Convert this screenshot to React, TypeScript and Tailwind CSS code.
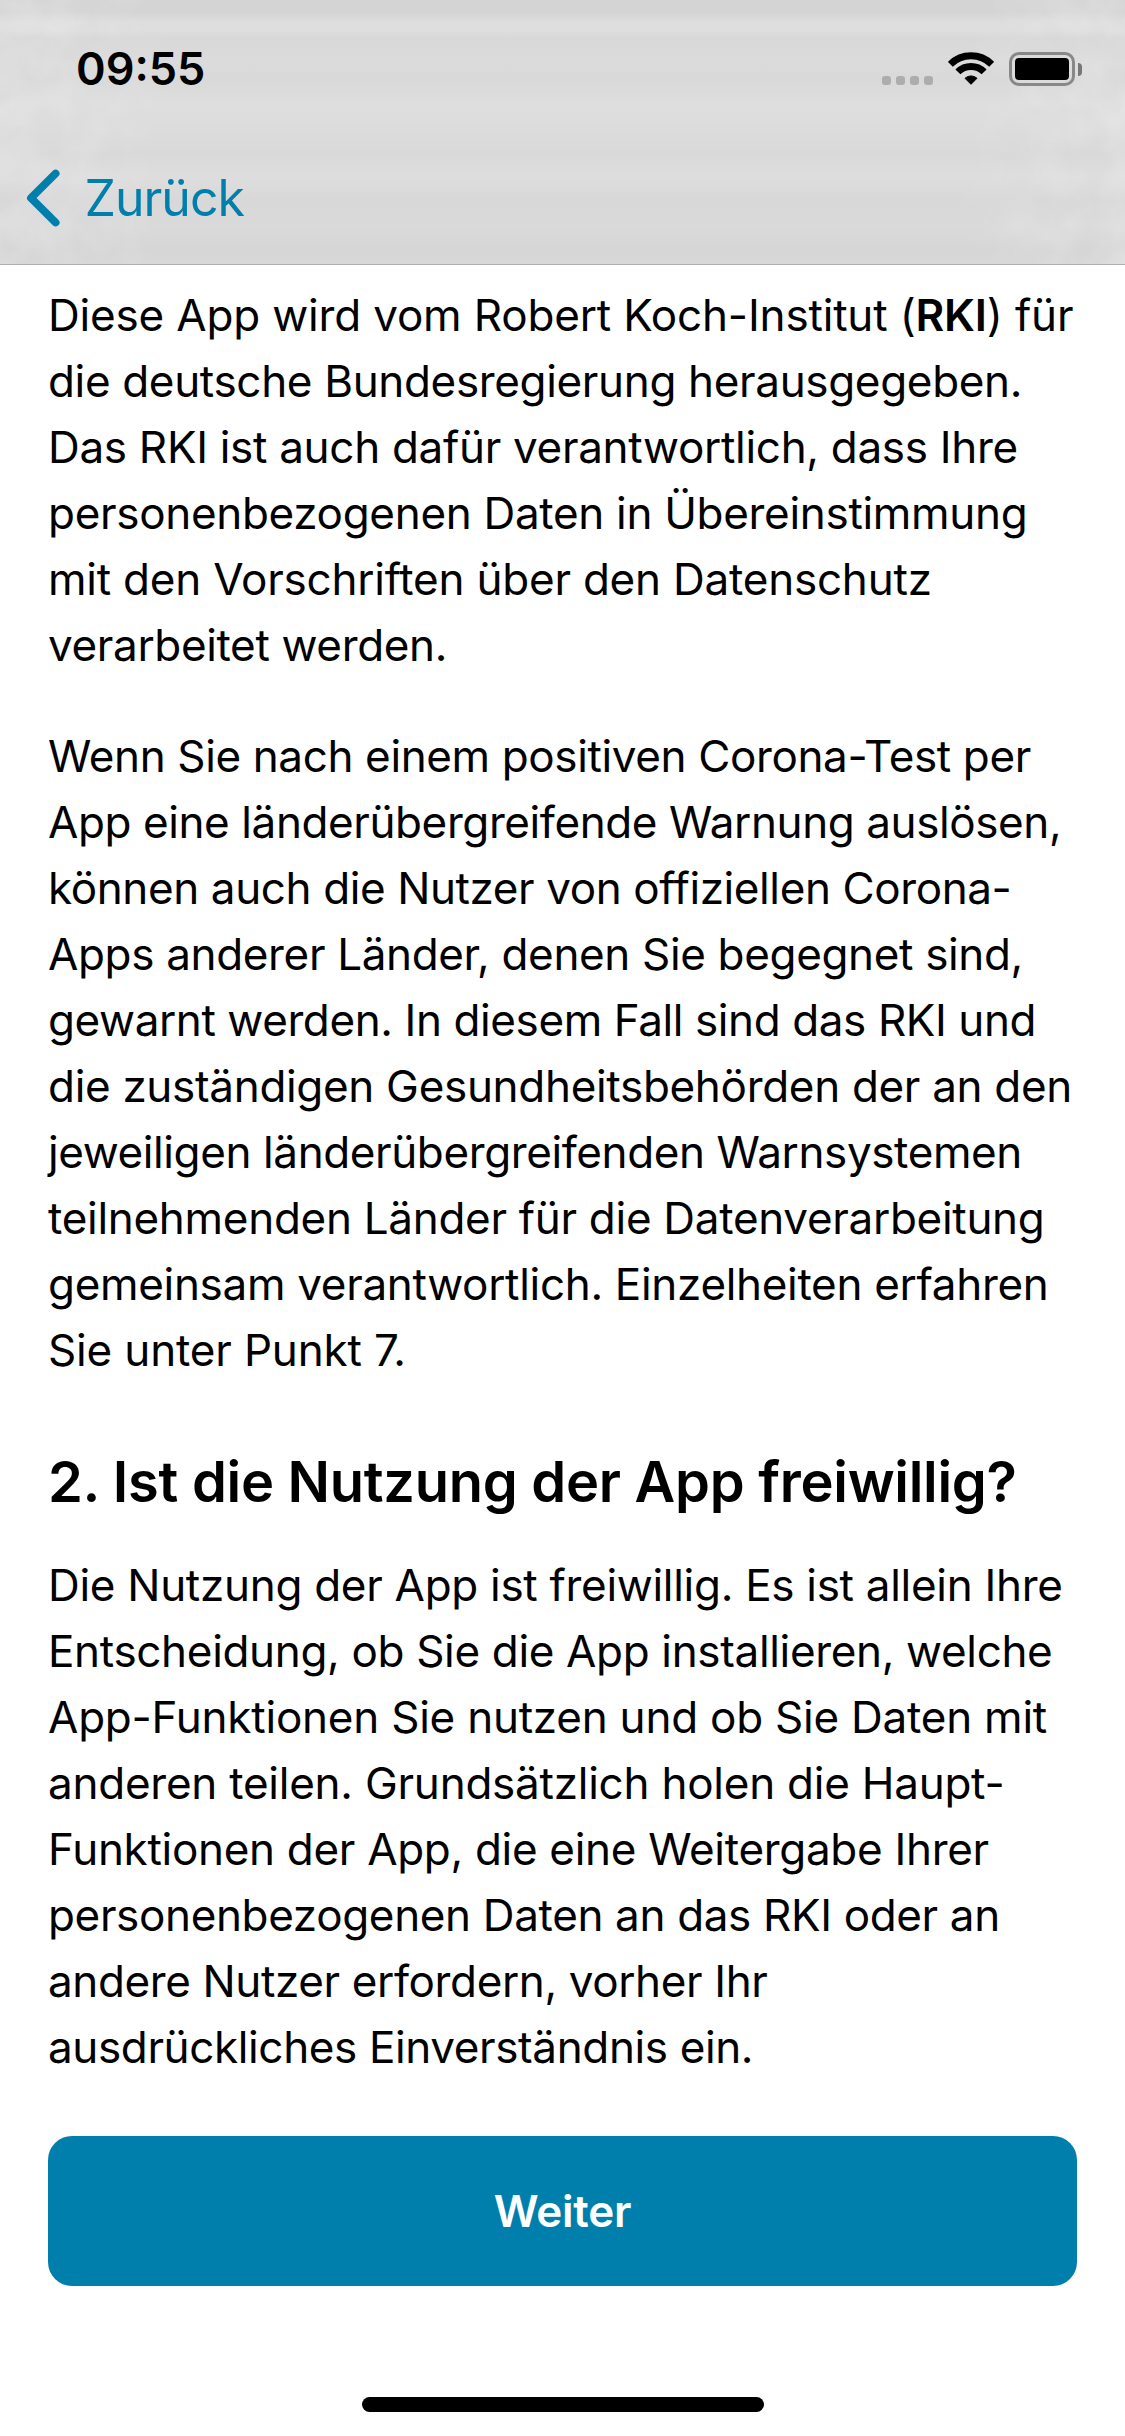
type Line = { text: string; tracking: string };

const intro: Line[] = [
  { text: "die deutsche Bundesregierung herausgegeben.", tracking: "tracking-[-0.34px]" },
  { text: "Das RKI ist auch dafür verantwortlich, dass Ihre", tracking: "tracking-[-0.3px]" },
  { text: "personenbezogenen Daten in Übereinstimmung", tracking: "tracking-[-0.31px]" },
  { text: "mit den Vorschriften über den Datenschutz", tracking: "tracking-[-0.22px]" },
  { text: "verarbeitet werden.", tracking: "tracking-[-0.35px]" },
];

const warning: Line[] = [
  { text: "Wenn Sie nach einem positiven Corona-Test per", tracking: "tracking-[-0.37px]" },
  { text: "App eine länderübergreifende Warnung auslösen,", tracking: "tracking-[-0.4px]" },
  { text: "können auch die Nutzer von offiziellen Corona-", tracking: "tracking-[-0.39px]" },
  { text: "Apps anderer Länder, denen Sie begegnet sind,", tracking: "tracking-[-0.34px]" },
  { text: "gewarnt werden. In diesem Fall sind das RKI und", tracking: "tracking-[-0.4px]" },
  { text: "die zuständigen Gesundheitsbehörden der an den", tracking: "tracking-[-0.31px]" },
  { text: "jeweiligen länderübergreifenden Warnsystemen", tracking: "tracking-[-0.39px]" },
  { text: "teilnehmenden Länder für die Datenverarbeitung", tracking: "tracking-[-0.29px]" },
  { text: "gemeinsam verantwortlich. Einzelheiten erfahren", tracking: "tracking-[-0.31px]" },
  { text: "Sie unter Punkt 7.", tracking: "tracking-[-0.16px]" },
];

const voluntary: Line[] = [
  { text: "Die Nutzung der App ist freiwillig. Es ist allein Ihre", tracking: "tracking-[-0.29px]" },
  { text: "Entscheidung, ob Sie die App installieren, welche", tracking: "tracking-[-0.33px]" },
  { text: "App-Funktionen Sie nutzen und ob Sie Daten mit", tracking: "tracking-[-0.23px]" },
  { text: "anderen teilen. Grundsätzlich holen die Haupt-", tracking: "tracking-[-0.24px]" },
  { text: "Funktionen der App, die eine Weitergabe Ihrer", tracking: "tracking-[-0.3px]" },
  { text: "personenbezogenen Daten an das RKI oder an", tracking: "tracking-[-0.35px]" },
  { text: "andere Nutzer erfordern, vorher Ihr", tracking: "tracking-[-0.37px]" },
  { text: "ausdrückliches Einverständnis ein.", tracking: "tracking-[-0.37px]" },
];

function Lines({ lines }: { lines: Line[] }) {
  return (
    <>
      {lines.map((line) => (
        <span key={line.text} className={`block whitespace-nowrap ${line.tracking}`}>
          {line.text}
        </span>
      ))}
    </>
  );
}

/* Faint mottling that fades out towards the middle of the bar. */
function HeaderTexture() {
  return (
    <svg className="absolute inset-0 size-full" preserveAspectRatio="none" aria-hidden="true">
      <defs>
        <filter id="mottle" x="0" y="0" width="100%" height="100%">
          <feTurbulence type="fractalNoise" baseFrequency="0.028" numOctaves="3" seed="8" />
          <feColorMatrix values="0 0 0 0 1  0 0 0 0 1  0 0 0 0 1  1.1 0 0 0 -0.28" />
        </filter>
        <linearGradient id="edges">
          <stop offset="0" stopColor="#fff" />
          <stop offset="0.07" stopColor="#fff" stopOpacity="0.8" />
          <stop offset="0.17" stopColor="#fff" stopOpacity="0" />
          <stop offset="0.84" stopColor="#fff" stopOpacity="0" />
          <stop offset="0.94" stopColor="#fff" stopOpacity="0.8" />
          <stop offset="1" stopColor="#fff" />
        </linearGradient>
        <mask id="sides">
          <rect width="100%" height="100%" fill="url(#edges)" />
        </mask>
      </defs>
      <g mask="url(#sides)">
        <rect width="100%" height="100%" filter="url(#mottle)" opacity="0.32" />
      </g>
    </svg>
  );
}

function StatusBar() {
  return (
    <div className="relative flex h-[138px] items-center justify-between pr-[43px] pl-[76px]">
      <span className="text-[45px] leading-[60px] font-semibold">09:55</span>
      <div className="flex items-center">
        <div className="mt-[23px] mr-[15px] flex gap-[5px]">
          {[0, 1, 2, 3].map((n) => (
            <span key={n} className="size-[9px] rounded-[3px] bg-[#adadad]" />
          ))}
        </div>
        <svg width="46" height="33" viewBox="0 0 46 33" className="-mt-px mr-[15px]" fill="none">
          <path d="M2.3 12.3a29.3 29.3 0 0 1 41.4 0" stroke="#000" strokeWidth="7" />
          <path d="M9.9 19.9a18.5 18.5 0 0 1 26.2 0" stroke="#000" strokeWidth="7" />
          <path d="M23 32.3 17 26.3a8.8 8.8 0 0 1 12 0Z" fill="#000" stroke="#000" strokeWidth="1" strokeLinejoin="round" />
        </svg>
        <div className="flex h-[34px] w-[66px] rounded-[10px] border-3 border-[#888] p-[3px]">
          <div className="flex-1 rounded-[4px] bg-black" />
        </div>
        <div className="ml-[3px] h-[13px] w-1 rounded-r-full bg-[#777]" />
      </div>
    </div>
  );
}

export default function App() {
  return (
    <div className="flex h-[2436px] w-[1125px] flex-col overflow-hidden bg-white font-['Inter',sans-serif] text-black">
      <header className="relative h-[265px] shrink-0 border-b border-[#b0b0b0] bg-[linear-gradient(#d5d5d5_0px,#d4d4d4_12px,#dddddd_22px,#dedede_30px,#d8d8d8_38px,#dbdbdb_62px,#d9d9d9_80px,#dedede_104px,#dddddd_122px,#dbdbdb_138px,#d9d9d9_154px,#dddddd_174px,#dddddd_180px,#d8d8d8_200px,#dadada_226px,#d6d6d6_250px,#d8d8d8_264px)]">
        <HeaderTexture />
        <StatusBar />
        <nav className="relative flex h-[120px] items-center pl-[26px] text-[#007fad]">
          <svg width="34" height="58" viewBox="0 0 34 58" fill="none">
            <path d="M29.6 4.6 5 29l24.6 24.4" stroke="currentColor" strokeWidth="7.8" strokeLinecap="round" strokeLinejoin="round" />
          </svg>
          <span className="ml-[24.5px] text-[50px] leading-[60px] tracking-[-1px]">Zurück</span>
        </nav>
      </header>

      <main className="px-12 pt-[17px] text-[44px] leading-[66px]">
        <p>
          <span className="block tracking-[-0.17px] whitespace-nowrap">
            Diese App wird vom Robert Koch-Institut (<b className="font-semibold">RKI</b>) für
          </span>
          <Lines lines={intro} />
        </p>
        <p className="mt-[45px]">
          <Lines lines={warning} />
        </p>
        <h2 className="mt-[65px] text-[56px] leading-[68px] font-semibold tracking-[-0.28px] whitespace-nowrap">
          2. Ist die Nutzung der App freiwillig?
        </h2>
        <p className="mt-9">
          <Lines lines={voluntary} />
        </p>
        <button className="mt-14 flex h-[150px] w-full items-center justify-center rounded-[24px] bg-[#007fad] font-semibold tracking-[-0.2px] text-white">
          Weiter
        </button>
      </main>

      <div className="mt-auto mb-6 h-[15px] w-[402px] self-center rounded-full bg-black" />
    </div>
  );
}
